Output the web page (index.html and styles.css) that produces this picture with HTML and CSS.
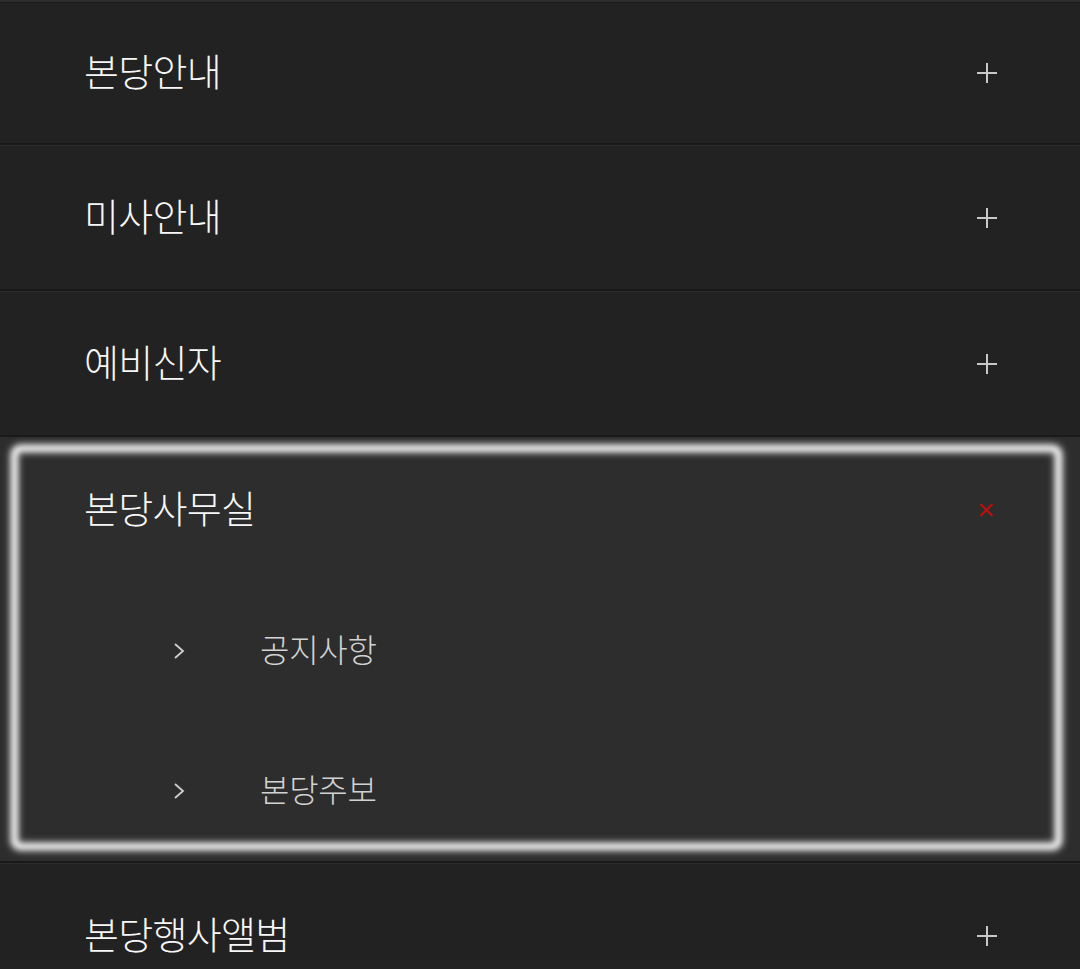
FILE: index.html
```html
<!DOCTYPE html>
<html lang="ko">
<head>
<meta charset="utf-8">
<link rel="stylesheet" href="styles.css">
</head>
<body>
<ul class="menu">
  <li class="item">
    <div class="head"><span class="label">본당안내</span><span class="icon plus"></span></div>
  </li>
  <li class="item">
    <div class="head"><span class="label">미사안내</span><span class="icon plus"></span></div>
  </li>
  <li class="item">
    <div class="head"><span class="label">예비신자</span><span class="icon plus"></span></div>
  </li>
  <li class="item open">
    <div class="head"><span class="label">본당사무실</span><span class="icon close"></span></div>
    <ul class="sub">
      <li class="sub-item"><span class="chev"><svg width="14" height="18" viewBox="0 0 14 18"><path d="M3 2 L11 9 L3 16" fill="none" stroke="#d0d0d0" stroke-width="1.8"/></svg></span><span class="sub-label">공지사항</span></li>
      <li class="sub-item"><span class="chev"><svg width="14" height="18" viewBox="0 0 14 18"><path d="M3 2 L11 9 L3 16" fill="none" stroke="#d0d0d0" stroke-width="1.8"/></svg></span><span class="sub-label">본당주보</span></li>
    </ul>
    <div class="focus-ring"></div>
  </li>
  <li class="item">
    <div class="head"><span class="label">본당행사앨범</span><span class="icon plus"></span></div>
  </li>
</ul>
</body>
</html>
```

FILE: styles.css
```css
html, body {
  margin: 0;
  padding: 0;
  background: #222222;
  overflow: hidden;
}
body {
  font-family: "Noto Sans CJK KR", "Noto Sans", sans-serif;
}
.menu {
  list-style: none;
  margin: 0;
  padding: 0;
}
.menu::before {
  content: "";
  display: block;
  height: 2px;
  background: #2e2e2e;
  border-bottom: 1px solid #1b1b1b;
}
.item {
  position: relative;
  background: #222222;
  border-top: 1px solid #2c2c2c;
  border-bottom: 2px solid #191919;
}
.item:first-child {
  border-top: none;
}
.item:first-child .head {
  height: 140px;
}
.head {
  height: 143px;
  display: flex;
  align-items: center;
  justify-content: space-between;
  padding: 0 83px 0 84px;
}
.label {
  color: #f7f7f7;
  font-size: 38px;
  font-weight: 300;
  letter-spacing: -0.7px;
  line-height: 1;
  margin-bottom: 6px;
}
.icon {
  position: relative;
  width: 20px;
  height: 20px;
}
.plus::before,
.plus::after {
  content: "";
  position: absolute;
  background: #c8c8c8;
}
.plus::before {
  left: 0;
  right: 0;
  top: 9px;
  height: 2px;
}
.plus::after {
  top: 0;
  bottom: 0;
  left: 9px;
  width: 2px;
}
.close::before,
.close::after {
  content: "";
  position: absolute;
  left: 1px;
  top: 9px;
  width: 17px;
  height: 2px;
  background: #c40d0d;
}
.close::before { transform: rotate(45deg); }
.close::after { transform: rotate(-45deg); }
.open {
  background: #2d2d2d;
}
.sub {
  list-style: none;
  margin: 0;
  padding: 0;
}
.sub-item {
  height: 140px;
  display: flex;
  align-items: center;
  padding-left: 172px;
}
.chev {
  display: flex;
  width: 88px;
}
.sub-label {
  color: #d2d2d2;
  font-size: 32px;
  font-weight: 300;
  letter-spacing: -0.3px;
  line-height: 1;
  margin-bottom: 6px;
}
.focus-ring {
  position: absolute;
  left: 11px;
  top: 7px;
  right: 18px;
  bottom: 11px;
  border: 7px solid #ffffff;
  border-radius: 9px;
  filter: blur(3px);
  box-shadow: 0 0 6px rgba(255, 255, 255, 0.45), inset 0 0 6px rgba(255, 255, 255, 0.35);
  pointer-events: none;
}
```
